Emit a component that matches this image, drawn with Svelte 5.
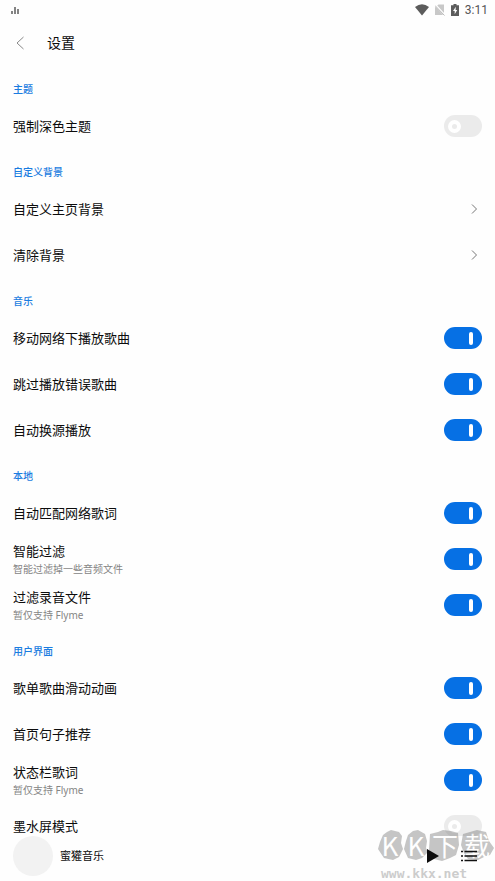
<script>
  const sections = [
    { title: '主题', rows: [{ label: '强制深色主题', kind: 'switch', on: false }] },
    {
      title: '自定义背景',
      rows: [
        { label: '自定义主页背景', kind: 'link' },
        { label: '清除背景', kind: 'link' }
      ]
    },
    {
      title: '音乐',
      rows: [
        { label: '移动网络下播放歌曲', kind: 'switch', on: true },
        { label: '跳过播放错误歌曲', kind: 'switch', on: true },
        { label: '自动换源播放', kind: 'switch', on: true }
      ]
    },
    {
      title: '本地',
      rows: [
        { label: '自动匹配网络歌词', kind: 'switch', on: true },
        { label: '智能过滤', note: '智能过滤掉一些音频文件', kind: 'switch', on: true },
        { label: '过滤录音文件', note: '暂仅支持 Flyme', kind: 'switch', on: true }
      ]
    },
    {
      title: '用户界面',
      rows: [
        { label: '歌单歌曲滑动动画', kind: 'switch', on: true },
        { label: '首页句子推荐', kind: 'switch', on: true },
        { label: '状态栏歌词', note: '暂仅支持 Flyme', kind: 'switch', on: true },
        { label: '墨水屏模式', kind: 'switch', on: false }
      ]
    }
  ];
</script>

<div class="screen">
  <div class="status">
    <svg class="bars" width="8" height="7" viewBox="0 0 8 7"><path d="M1 4v3M4 0v7M7 2v5" stroke="#666" stroke-width="1.6" /></svg>
    <div class="indicators">
      <svg width="14" height="12" viewBox="0 0 14 12"><path d="M0 3Q7-2.600 14 3L7 11.500Z" fill="#5c5c5c" /></svg>
      <svg width="10" height="12" viewBox="0 0 10 12"><path d="M3.500 .5H9V11H0V3.500Z" fill="#c8c8c8" /><path d="M0 .5L10 11.500" stroke="#fff" stroke-width="2" /><path d="M0 1.500L9.500 11.500" stroke="#b8b8b8" stroke-width="1" /></svg>
      <svg width="8" height="12" viewBox="0 0 8 12"><path d="M2.500 0h3v1.200H8V12H0V1.200h2.500Z" fill="#5c5c5c" /><path d="M4.800 2.800L2 7h1.700v3.200L6.200 6H4.600Z" fill="#fff" /></svg>
      <time>3:11</time>
    </div>
  </div>

  <header>
    <button class="back" aria-label="返回">
      <svg width="8" height="14" viewBox="0 0 8 14"><path d="M7.500 1L1 7L7.500 13" fill="none" stroke="#888" /></svg>
    </button>
    <h1>设置</h1>
  </header>

  <main>
    {#each sections as section}
      <section>
        <h2>{section.title}</h2>
        {#each section.rows as row}
          {#if row.kind === 'link'}
            <a class="row" href="#top">
              <span class="label">{row.label}</span>
              <svg class="chevron" width="7" height="10" viewBox="0 0 7 10"><path d="M1 .5L5.500 5L1 9.500" fill="none" stroke="#777" /></svg>
            </a>
          {:else}
            <label class="row">
              <span class="text">
                <span class="label">{row.label}</span>
                {#if row.note}<span class="note">{row.note}</span>{/if}
              </span>
              <input type="checkbox" role="switch" checked={row.on} />
            </label>
          {/if}
        {/each}
      </section>
    {/each}
  </main>

  <footer>
    <span class="cover"></span>
    <span class="song">蜜獾音乐</span>
    <button aria-label="播放">
      <svg width="12" height="14" viewBox="0 0 12 14"><path d="M0 0L12 7L0 14Z" fill="#0c0c0c" /></svg>
    </button>
    <button aria-label="播放列表">
      <svg width="16" height="12" viewBox="0 0 16 12"><path d="M0 1.500h2M0 6h2M0 10.500h2M3.500 1.500H16M3.500 6H16M3.500 10.500H16" stroke="#111" stroke-width="1.400" /></svg>
    </button>
  </footer>

  <div class="watermark">
    <div class="brand">
      <svg width="118" height="36" viewBox="0 0 118 36" fill="#777">
        <path d="M6 6L10 3L14 1L22 3L25 7L24 14L26 20L22 28L16 31L7 29L1 20L3 13Z" />
        <path d="M31 6L36 2L41 1L48 5L50 12L49 19L51 23L45 29L39 31L31 29L27 20L29 12Z" />
        <path d="M53 5L61 3L66 1L74 2L81 4L82 16L79 26L73 29L65 32L57 30L52 21Z" />
        <path d="M86 5L93 3L100 1L109 3L112 12L117 19L113 26L107 28L101 31L91 30L87 24L84 16Z" />
      </svg>
      <div class="glyphs"><span>K</span><span>K</span><span>下</span><span>载</span></div>
    </div>
    <span class="url">www.kkx.net</span>
  </div>
</div>

<style>
  :global(body) { margin: 0; background: #fefefe; }
  .screen {
    position: relative;
    height: 100vh;
    overflow: hidden;
    display: flex;
    flex-direction: column;
    background: #fefefe;
    color: #0c0c0c;
    font-family: 'Noto Sans', 'Noto Sans CJK SC', sans-serif;
  }
  .status {
    flex: none;
    height: 20px;
    padding: 0 7px 0 11px;
    display: flex;
    align-items: center;
    justify-content: space-between;
  }
  .indicators { display: flex; align-items: center; gap: 6px; }
  time { font: 12px/20px Roboto, sans-serif; color: #555; }
  header { flex: none; height: 46px; display: flex; align-items: center; padding: 0 13px; }
  button { padding: 0; border: 0; background: none; display: flex; align-items: center; justify-content: center; }
  .back { width: 14px; height: 32px; }
  h1 { margin: 0 0 0 20px; font-size: 14px; font-weight: 400; line-height: 20px; }
  main { flex: 1; min-height: 0; overflow: hidden; }
  h2 { margin: 0; padding: 15px 13px 6px; font-size: 10px; line-height: 16px; font-weight: 500; color: #1a7ce0; }
  .row {
    height: 46px;
    padding: 0 13px;
    display: flex;
    align-items: center;
    justify-content: space-between;
    color: inherit;
    text-decoration: none;
  }
  .text { display: flex; flex-direction: column; }
  .label { font-size: 13px; line-height: 20px; }
  .note { font-size: 10px; line-height: 16px; color: #858585; }
  .chevron { margin-right: 4px; }
  input {
    appearance: none;
    flex: none;
    margin: 0;
    width: 38px;
    height: 22px;
    border-radius: 11px;
    background: #ebebeb;
    display: flex;
    align-items: center;
    padding: 0 4px;
  }
  input::before { content: ''; box-sizing: border-box; width: 13px; height: 13px; border: 4px solid #fff; border-radius: 50%; }
  input:checked { background: #0670e4; justify-content: flex-end; padding-right: 9px; }
  input:checked::before { width: 4px; height: 13px; border: 0; border-radius: 2px; background: #fff; }
  footer {
    box-sizing: border-box;
    flex: none;
    height: 45px;
    padding: 0 18px 6px 13px;
    display: flex;
    align-items: center;
    background: #fefefe;
  }
  .cover { width: 40px; height: 40px; border-radius: 50%; background: #f2f2f2; }
  .song { flex: 1; margin-left: 7px; font-size: 11px; line-height: 20px; }
  footer button { position: relative; z-index: 2; height: 32px; }
  footer button + button { margin-left: 22px; }
  .watermark { position: absolute; right: 0; bottom: 0; width: 118px; opacity: 0.42; pointer-events: none; }
  .brand { display: grid; }
  .brand > * { grid-area: 1 / 1; }
  .glyphs {
    display: grid;
    grid-template-columns: 26px 26px 32px 32px;
    justify-items: center;
    height: 38px;
    font: 400 26px/32px 'Noto Sans CJK SC', sans-serif;
    color: #fff;
  }
  .url { display: block; margin-left: 4px; font: bold 13px/14px 'DejaVu Sans Mono', monospace; color: #888; }
</style>
